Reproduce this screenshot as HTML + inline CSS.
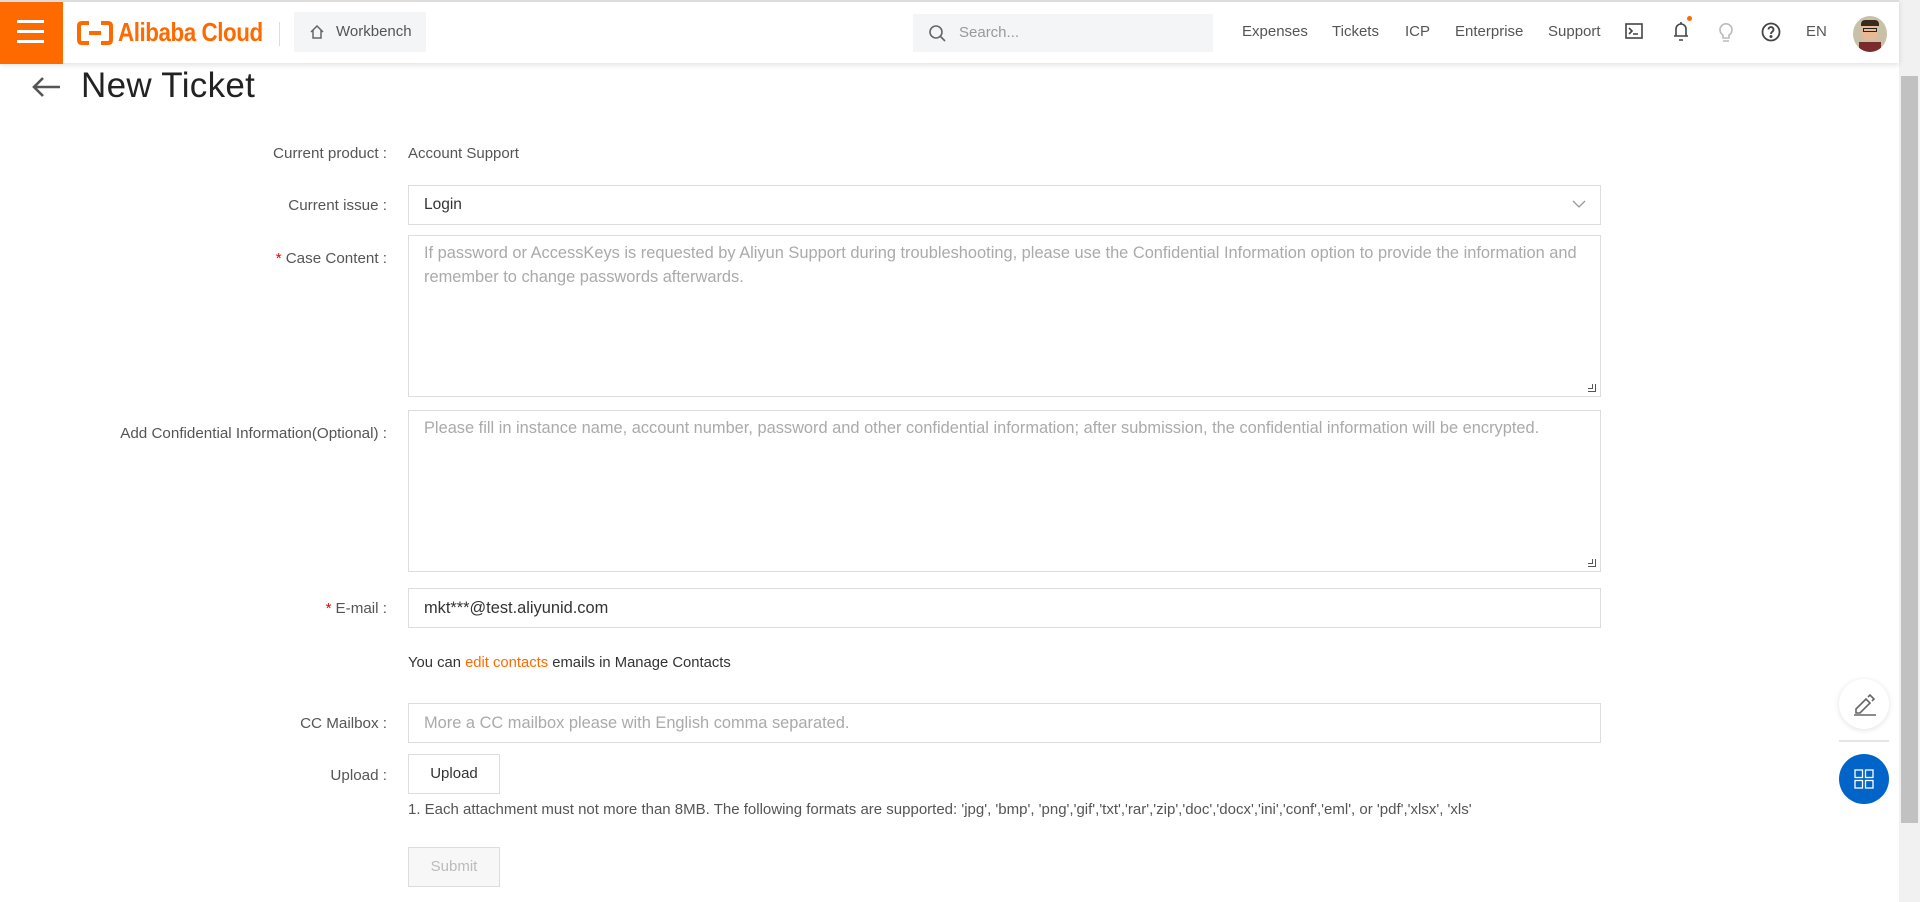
<!DOCTYPE html>
<html><head><meta charset="utf-8">
<style>
*{box-sizing:border-box;margin:0;padding:0}
html,body{width:1920px;height:902px;overflow:hidden;background:#fff;font-family:"Liberation Sans",Arial,sans-serif;color:#333}
.hdr{position:absolute;left:0;top:0;width:1899px;height:63px;background:#fff;border-top:2px solid #ddd;box-shadow:0 2px 5px rgba(0,0,0,.12);z-index:2}
.ham{position:absolute;left:0;top:0;width:63px;height:62px;background:#ff6a00}
.ham i{position:absolute;left:17px;width:27px;height:3px;background:#fff}
.logo{position:absolute;left:118px;top:15px;color:#ff6a00;font-size:26px;font-weight:bold;letter-spacing:-.5px;transform:scaleX(.86);transform-origin:left}
.div{position:absolute;left:279px;top:20px;width:1px;height:24px;background:#ddd}
.wb{position:absolute;left:294px;top:10px;width:132px;height:40px;background:#f4f5f7;border-radius:2px;font-size:15px;color:#555;line-height:40px;padding-left:42px}
.search{position:absolute;left:913px;top:12px;width:300px;height:38px;background:#f4f5f7;font-size:15px;color:#999;line-height:38px;padding-left:46px}
.nav{position:absolute;top:21px;font-size:15px;color:#555}
.sb{position:absolute;left:1899px;top:0;width:21px;height:902px;background:#f1f1f1}
.thumb{position:absolute;left:1901px;top:76px;width:17px;height:747px;background:#c1c1c1}
.title{position:absolute;left:81px;top:66px;font-size:35px;color:#222;letter-spacing:.3px}
.lab{position:absolute;right:1533px;font-size:15.2px;color:#555;white-space:nowrap}
.lab b{color:#e00;font-weight:normal;margin-right:4px}
.box{position:absolute;left:408px;width:1193px;border:1px solid #dcdcdc;font-size:16.4px;color:#aaa;padding:0 15px}
.btn{position:absolute;left:408px;width:92px;height:40px;border:1px solid #ddd;font-size:15px;line-height:38px;text-align:center}
.rs{position:absolute;right:4px;bottom:4px;width:8px;height:8px;border-right:1px solid #555;border-bottom:1px solid #555}
.rs:after{content:"";position:absolute;right:2px;bottom:2px;width:4px;height:4px;border-right:1px solid #555;border-bottom:1px solid #555}
</style></head><body>
<div class="hdr">
 <div class="ham"><i style="top:18px"></i><i style="top:28px"></i><i style="top:38px"></i></div>
 <svg style="position:absolute;left:77px;top:19px" width="36" height="24" viewBox="0 0 36 24" fill="none" stroke="#ff6a00" stroke-width="4"><path d="M12 2H5Q2 2 2 5v14q0 3 3 3h7M24 2h7q3 0 3 3v14q0 3-3 3h-7M12 12h12"/></svg>
 <div class="logo">Alibaba Cloud</div>
 <div class="div"></div>
 <div class="wb"><svg style="position:absolute;left:16px;top:13px" width="14" height="14" viewBox="0 0 14 14" fill="none" stroke="#666" stroke-width="1.5"><path d="M1 7L7 1l6 6M3 5v8h8V5"/></svg>Workbench</div>
 <div class="search"><svg style="position:absolute;left:16px;top:11px" width="17" height="17" viewBox="0 0 17 17" fill="none" stroke="#666" stroke-width="1.6"><circle cx="7" cy="7" r="6"/><path d="M11.5 11.5L16 16"/></svg>Search...</div>
 <span class="nav" style="left:1242px">Expenses</span>
 <span class="nav" style="left:1332px">Tickets</span>
 <span class="nav" style="left:1405px">ICP</span>
 <span class="nav" style="left:1455px">Enterprise</span>
 <span class="nav" style="left:1548px">Support</span>
 <svg style="position:absolute;left:1625px;top:21px" width="18" height="16" viewBox="0 0 18 16" fill="none" stroke="#444" stroke-width="1.6"><rect x="1" y="1" width="16" height="14"/><path d="M4 5l3 3-3 3M8 11h5"/></svg>
 <svg style="position:absolute;left:1672px;top:18px" width="18" height="22" viewBox="0 0 18 22" fill="none" stroke="#444" stroke-width="1.6"><path d="M4 16V9a5 5 0 0110 0v7M2 16h14M7 20h4M9 2v2"/></svg>
 <div style="position:absolute;left:1687px;top:14px;width:5px;height:5px;border-radius:50%;background:#ff6a00"></div>
 <svg style="position:absolute;left:1718px;top:19px" width="16" height="22" viewBox="0 0 16 22" fill="none" stroke="#bbb" stroke-width="1.6"><path d="M5 14a6 6 0 116 0v3H5zM5 20h6"/></svg>
 <svg style="position:absolute;left:1761px;top:20px" width="20" height="20" viewBox="0 0 20 20" fill="none" stroke="#444" stroke-width="1.8"><circle cx="10" cy="10" r="8.5"/><path d="M7.5 7.5a2.5 2.5 0 114 2c-1 .7-1.5 1.2-1.5 2.5"/><circle cx="10" cy="14.5" r=".6" fill="#444"/></svg>
 <span class="nav" style="left:1806px">EN</span>
 <div style="position:absolute;left:1853px;top:14px;width:34px;height:36px;border-radius:50%;background:#c9c0a8;overflow:hidden"><div style="position:absolute;left:9px;top:6px;width:16px;height:18px;background:#e9b996;border-radius:6px"></div><div style="position:absolute;left:8px;top:4px;width:18px;height:6px;background:#3a2a20;border-radius:4px 4px 0 0"></div><div style="position:absolute;left:10px;top:12px;width:14px;height:4px;border:1px solid #222"></div><div style="position:absolute;left:6px;top:26px;width:22px;height:12px;background:#7a2b2b"></div></div>
</div>
<div class="sb"></div><div class="thumb"></div>
<svg style="position:absolute;left:31px;top:76px" width="30" height="22" viewBox="0 0 30 22" fill="none" stroke="#555" stroke-width="2.6"><path d="M29 11H3M12 2l-9 9 9 9"/></svg>
<div class="title">New Ticket</div>

<div class="lab" style="top:145px">Current product :</div>
<div style="position:absolute;left:408px;top:145px;font-size:15px;color:#555">Account Support</div>

<div class="lab" style="top:197px">Current issue :</div>
<div class="box" style="top:185px;height:40px;line-height:38px;color:#333;font-size:15.5px">Login
 <svg style="position:absolute;right:14px;top:14px" width="14" height="9" viewBox="0 0 14 9" fill="none" stroke="#999" stroke-width="1.3"><path d="M1 1l6 6 6-6"/></svg></div>

<div class="lab" style="top:250px"><b>*</b>Case Content :</div>
<div class="box" style="top:235px;height:162px;padding-top:5px;line-height:24px">If password or AccessKeys is requested by Aliyun Support during troubleshooting, please use the Confidential Information option to provide the information and remember to change passwords afterwards.<div class="rs"></div></div>

<div class="lab" style="top:425px">Add Confidential Information(Optional) :</div>
<div class="box" style="top:410px;height:162px;padding-top:5px;line-height:24px">Please fill in instance name, account number, password and other confidential information; after submission, the confidential information will be encrypted.<div class="rs"></div></div>

<div class="lab" style="top:600px"><b>*</b>E-mail :</div>
<div class="box" style="top:588px;height:40px;line-height:38px;color:#333">mkt***@test.aliyunid.com</div>

<div style="position:absolute;left:408px;top:655px;font-size:14.8px;color:#333">You can <span style="color:#ff6a00">edit contacts</span> emails in Manage Contacts</div>

<div class="lab" style="top:715px">CC Mailbox :</div>
<div class="box" style="top:703px;height:40px;line-height:38px">More a CC mailbox please with English comma separated.</div>

<div class="lab" style="top:767px">Upload :</div>
<div class="btn" style="top:754px;color:#333">Upload</div>
<div style="position:absolute;left:408px;top:801px;font-size:15px;color:#555">1. Each attachment must not more than 8MB. The following formats are supported: 'jpg', 'bmp', 'png','gif','txt','rar','zip','doc','docx','ini','conf','eml', or 'pdf','xlsx', 'xls'</div>
<div class="btn" style="top:847px;background:#f7f7f7;color:#bbb">Submit</div>

<div style="position:absolute;left:1839px;top:679px;width:50px;height:50px;border-radius:50%;background:#fff;box-shadow:0 1px 6px rgba(0,0,0,.12)">
 <svg style="position:absolute;left:14px;top:13px" width="24" height="24" viewBox="0 0 24 24" fill="none" stroke="#666" stroke-width="1.6"><path d="M3 17l10-10 4 4-10 10H3zM15 5l2-2 4 4-2 2M1 23h22"/></svg></div>
<div style="position:absolute;left:1839px;top:740px;width:50px;height:2px;background:#e3e5ea"></div>
<div style="position:absolute;left:1839px;top:754px;width:50px;height:50px;border-radius:50%;background:#0064c8">
 <svg style="position:absolute;left:15px;top:15px" width="20" height="20" viewBox="0 0 20 20" fill="none" stroke="#fff" stroke-width="1.3"><rect x="1" y="1" width="7.5" height="7.5"/><rect x="11.5" y="1" width="7.5" height="7.5"/><rect x="1" y="11.5" width="7.5" height="7.5"/><rect x="11.5" y="11.5" width="7.5" height="7.5"/></svg></div>
</body></html>
